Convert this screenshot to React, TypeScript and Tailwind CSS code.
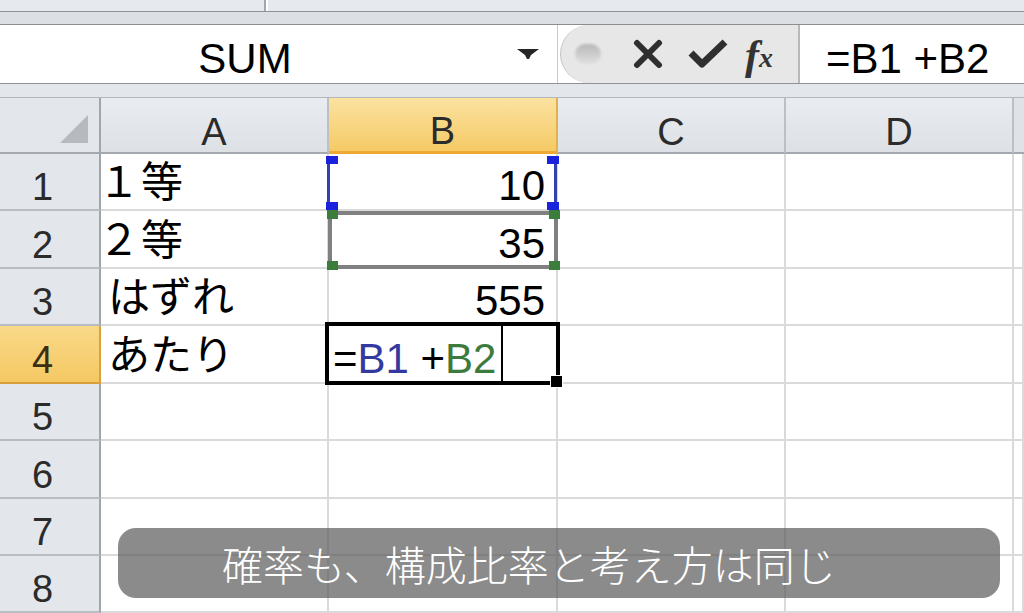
import React from 'react';

const rows = [
  { n: '1', h: 'h-[57px]', a: '１等', b: '10' },
  { n: '2', h: 'h-[58px]', a: '２等', b: '35' },
  { n: '3', h: 'h-[57px]', a: 'はずれ', b: '555' },
  { n: '4', h: 'h-[58px]', a: 'あたり', b: '' },
  { n: '5', h: 'h-[57px]', a: '', b: '' },
  { n: '6', h: 'h-[58px]', a: '', b: '' },
  { n: '7', h: 'h-[57px]', a: '', b: '' },
  { n: '8', h: 'h-[57px]', a: '', b: '' },
];

const cols = [
  { name: 'A', w: 'w-[228px]' },
  { name: 'B', w: 'w-[229px]' },
  { name: 'C', w: 'w-[228px]' },
  { name: 'D', w: 'w-[228px]' },
];

const cell = 'border-r-2 border-b-2 border-[#dadada] bg-white';

// full-width digit followed by a kanji, pulled together like the proportional sheet font
const Label = ({ text }: { text: string }) => {
  if (text.length === 2 && (text[0] === '１' || text[0] === '２')) {
    return (
      <span>
        <span className="-ml-[10px] mr-[1px]">{text[0]}</span>
        {text.slice(1)}
      </span>
    );
  }
  return <span>{text}</span>;
};

const FormulaBar = () => (
  <div className="flex h-[58px] bg-white">
    {/* name box */}
    <div className="flex w-[558px] items-end border-r border-[#c9c9c9]">
      <div className="flex w-[490px] justify-center pb-[3px] text-[42px] leading-none text-black">SUM</div>
      <div className="flex flex-1 items-center self-stretch pl-[27px]">
        <svg width="22" height="12" viewBox="0 0 22 12">
          <polygon points="0,1 22,1 14,7 12,11 10,11 8,7" fill="#262626" />
        </svg>
      </div>
    </div>
    {/* cancel / enter / fx */}
    <div className="flex w-[242px] pl-[2px] border-r-2 border-[#b8b8b8]">
      <div className="flex flex-1 items-center rounded-l-[29px] border-l border-[#c4c4c4] bg-[#e7e7e7]">
        <div className="ml-[14px] h-[20px] w-[26px] rounded-full bg-gradient-to-b from-[#b9b9b9] to-[#e0e0e0] blur-[1px]" />
        <svg className="ml-[32px]" width="30" height="30" viewBox="0 0 30 30">
          <path d="M4 4 L26 26 M26 4 L4 26" stroke="#2f2f2f" strokeWidth="6" strokeLinecap="round" />
        </svg>
        <svg className="ml-[24px]" width="42" height="32" viewBox="0 0 42 32">
          <polyline points="4,15 15,26 38,4" fill="none" stroke="#2f2f2f" strokeWidth="7" strokeLinejoin="round" />
        </svg>
        <div className="ml-[16px] mt-[2px] flex items-end font-['Liberation_Serif',serif] italic font-bold text-[#333] leading-none">
          <span className="text-[42px]">f</span>
          <span className="mb-[4px] text-[28px]">x</span>
        </div>
      </div>
    </div>
    <div className="flex flex-1 items-end pb-[3px] pl-[26px] text-[42px] leading-none text-black">=B1 +B2</div>
  </div>
);

const App = () => {
  return (
    <div className="relative h-[613px] w-[1024px] overflow-hidden bg-white font-['Liberation_Sans','Noto_Sans_CJK_JP',sans-serif]">
      {/* ribbon bottom */}
      <div className="flex h-[11px] bg-[#e6e9ee]">
        <div className="w-[266px] border-r-2 border-[#a3a6aa]" />
        <div className="w-[2px] bg-white" />
      </div>
      <div className="h-px bg-[#8f9296]" />
      <div className="h-[12px] bg-[#dcdfe3]" />
      <div className="h-px bg-[#8b8e92]" />
      <FormulaBar />
      <div className="h-px bg-[#8e9195]" />
      <div className="h-[13px] bg-[#e3e6ea]" />
      <div className="h-px bg-[#b3b7bc]" />

      {/* sheet */}
      <div className="flex flex-col">
        <div className="flex h-[56px]">
          <div className="relative w-[101px] border-r-2 border-b-2 border-r-[#a2a6ab] border-b-[#a4a9af] bg-[#e3e6ea]">
            <svg className="absolute left-[60px] top-[17px]" width="28" height="28" viewBox="0 0 28 28">
              <polygon points="28,0 28,28 0,28" fill="#b6babf" />
            </svg>
          </div>
          {cols.map((c) =>
            c.name === 'B' ? (
              <div
                key={c.name}
                className={`${c.w} flex items-end justify-center border-r-2 border-b-[3px] border-r-[#e3b14c] border-b-[#eea935] bg-gradient-to-b from-[#fbe3a0] to-[#f5c964] pb-[1px] text-[38px] leading-none text-[#2b2b2b]`}
              >
                {c.name}
              </div>
            ) : (
              <div
                key={c.name}
                className={`${c.w} flex items-end justify-center border-r-2 border-b-2 border-r-[#bcc0c5] border-b-[#a4a9af] bg-gradient-to-b from-[#e9ecf0] to-[#dde1e6] pb-[1px] text-[38px] leading-none text-[#2b2b2b]`}
              >
                {c.name}
              </div>
            )
          )}
          <div className="flex-1 border-b-2 border-b-[#a4a9af] bg-[#dfe2e7]" />
        </div>

        {rows.map((r) => (
          <div key={r.n} className={`flex ${r.h}`}>
            {r.n === '4' ? (
              <div className="flex w-[101px] items-end justify-center border-r-2 border-b-2 border-r-[#d9a23c] border-b-[#d9a03a] bg-gradient-to-b from-[#f9d988] to-[#f5c863] pb-[3px] pr-[14px] text-[38px] leading-none text-[#3a2f12]">
                {r.n}
              </div>
            ) : (
              <div className="flex w-[101px] items-end justify-center border-r-2 border-b-2 border-r-[#a2a6ab] border-b-[#b9bdc2] bg-[#e3e6ea] pb-[3px] pr-[14px] text-[38px] leading-none text-[#2b2b2b]">
                {r.n}
              </div>
            )}
            <div className={`w-[228px] ${cell} flex items-end pb-[5px] pl-[7px] text-[42px] leading-none text-black`}>
              <Label text={r.a} />
            </div>
            <div className={`w-[229px] ${cell} flex items-end justify-end pb-[2px] pr-[11px] text-[42px] leading-none text-black`}>
              {r.n === '4' ? (
                <span className="mr-auto pl-[4px]">
                  =<span className="text-[#33399e]">B1</span> +<span className="text-[#3d7b3d]">B2</span>
                </span>
              ) : (
                r.b
              )}
            </div>
            <div className={`w-[228px] ${cell}`} />
            <div className={`w-[228px] ${cell}`} />
            <div className={`flex-1 ${cell} border-r-0`} />
          </div>
        ))}
      </div>

      {/* range finder B1 (blue) */}
      <div className="absolute left-[327px] top-[157px] h-[52px] w-[3px] bg-[#3340b0]" />
      <div className="absolute left-[554px] top-[157px] h-[52px] w-[3px] bg-[#3340b0]" />
      <div className="absolute left-[326px] top-[156px] h-[8px] w-[12px] bg-[#1b22dc]" />
      <div className="absolute left-[547px] top-[156px] h-[8px] w-[12px] bg-[#1b22dc]" />

      {/* range finder B2 (marching border with green corners) */}
      <div className="absolute left-[328px] top-[211px] h-[58px] w-[230px] border-4 border-[#808080]" />
      <div className="absolute left-[327px] top-[210px] h-[9px] w-[11px] bg-[#3b7d3b]" />
      <div className="absolute left-[549px] top-[210px] h-[9px] w-[11px] bg-[#3b7d3b]" />
      <div className="absolute left-[327px] top-[261px] h-[9px] w-[11px] bg-[#3b7d3b]" />
      <div className="absolute left-[549px] top-[261px] h-[9px] w-[11px] bg-[#3b7d3b]" />
      <div className="absolute left-[326px] top-[202px] h-[8px] w-[12px] bg-[#1b22dc]" />
      <div className="absolute left-[547px] top-[202px] h-[8px] w-[12px] bg-[#1b22dc]" />

      {/* active cell B4 */}
      <div className="absolute left-[325px] top-[322px] h-[63px] w-[235px] border-4 border-black" />
      <div className="absolute left-[501px] top-[322px] h-[62px] w-[2px] bg-black" />
      <div className="absolute left-[550px] top-[375px] h-[13px] w-[13px] border border-white bg-black" />

      {/* caption */}
      <div className="absolute left-[118px] top-[528px] flex h-[70px] w-[882px] items-center rounded-[18px] bg-[#5a5a5a]/70 pl-[104px] font-['Noto_Sans_CJK_JP',sans-serif] text-[41px] font-light leading-none text-white">
        確率も、構成比率と考え方は同じ
      </div>
    </div>
  );
};

export default App;
